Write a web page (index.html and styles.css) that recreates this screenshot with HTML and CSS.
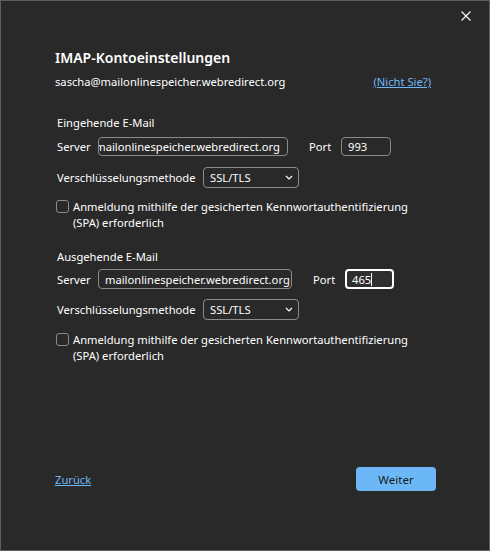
FILE: index.html
```html
<!DOCTYPE html>
<html lang="de">
<head>
    <meta charset="UTF-8">
    <title>IMAP-Kontoeinstellungen</title>
    <link rel="stylesheet" href="styles.css">
</head>
<body>
    <div class="dialog">
        <button class="close" aria-label="Schließen">
            <svg width="10" height="10" viewBox="0 0 10 10"><path d="M0.5 0.5 L9.5 9.5 M9.5 0.5 L0.5 9.5" stroke="#fff" stroke-width="1.1" fill="none"/></svg>
        </button>

        <h1>IMAP-Kontoeinstellungen</h1>
        <div class="account">
            <span>sascha@mailonlinespeicher.webredirect.org</span>
            <a href="#" class="link">(Nicht Sie?)</a>
        </div>

        <div class="section first">
            <div class="heading">Eingehende E-Mail</div>
            <div class="row">
                <span class="lbl server-lbl">Server</span>
                <div class="field server scrolled"><span>mailonlinespeicher.webredirect.org</span></div>
                <span class="lbl port-lbl">Port</span>
                <div class="field port"><span>993</span></div>
            </div>
            <div class="row enc">
                <span class="lbl enc-lbl">Verschlüsselungsmethode</span>
                <div class="select">
                    <span>SSL/TLS</span>
                    <svg width="8" height="5" viewBox="0 0 8 5"><path d="M1 1 L4 4 L7 1" stroke="#fff" stroke-width="1.2" fill="none"/></svg>
                </div>
            </div>
            <label class="check">
                <span class="box"></span>
                <span>Anmeldung mithilfe der gesicherten Kennwortauthentifizierung<br>(SPA) erforderlich</span>
            </label>
        </div>

        <div class="section second">
            <div class="heading">Ausgehende E-Mail</div>
            <div class="row">
                <span class="lbl server-lbl">Server</span>
                <div class="field server wide"><span>mailonlinespeicher.webredirect.org</span></div>
                <span class="lbl port-lbl">Port</span>
                <div class="field port focused"><span>465</span><i class="caret"></i></div>
            </div>
            <div class="row enc">
                <span class="lbl enc-lbl">Verschlüsselungsmethode</span>
                <div class="select">
                    <span>SSL/TLS</span>
                    <svg width="8" height="5" viewBox="0 0 8 5"><path d="M1 1 L4 4 L7 1" stroke="#fff" stroke-width="1.2" fill="none"/></svg>
                </div>
            </div>
            <label class="check">
                <span class="box"></span>
                <span>Anmeldung mithilfe der gesicherten Kennwortauthentifizierung<br>(SPA) erforderlich</span>
            </label>
        </div>

        <div class="footer">
            <a href="#" class="link">Zurück</a>
            <button class="primary">Weiter</button>
        </div>
    </div>
</body>
</html>
```

FILE: styles.css
```css
body {
    margin: 0;
    background-color: #292929;
    font-family: "Segoe UI", "Noto Sans", sans-serif;
    font-size: 11.2px;
    color: #fff;
}
.dialog {
    position: relative;
    box-sizing: border-box;
    width: 490px;
    height: 551px;
    border: 1px solid #5e5e5e;
    padding: 47px 0 59px 54px;
    display: flex;
    flex-direction: column;
}
.close {
    position: absolute;
    top: 10px;
    right: 18px;
    width: 10px;
    height: 10px;
    padding: 0;
    border: 0;
    background: none;
    line-height: 0;
}
h1 {
    margin: 0;
    font-size: 14px;
    font-weight: 600;
    line-height: 20px;
}
.account {
    display: flex;
    justify-content: space-between;
    width: 376px;
    margin-top: 6px;
    line-height: 16px;
}
.link {
    color: #6cb8f6;
}
.section {
    margin-left: 2px;
}
.section.first {
    margin-top: 25px;
}
.section.second {
    margin-top: 18px;
}
.heading {
    line-height: 16px;
}
.row {
    display: flex;
    align-items: center;
    margin-top: 6px;
}
.second .row {
    margin-top: 4px;
}
.row.enc {
    margin-top: 11px;
}
.second .row.enc {
    margin-top: 10px;
}
.lbl {
    flex: none;
}
.server-lbl {
    width: 41px;
}
.port-lbl {
    width: 32px;
    margin-left: 21px;
}
.enc-lbl {
    width: 146px;
}
.field {
    box-sizing: border-box;
    height: 19px;
    border: 1px solid #8a8a8a;
    border-radius: 4px;
    padding: 0 6px;
    display: flex;
    align-items: center;
    overflow: hidden;
    white-space: nowrap;
}
.second .field {
    height: 20px;
}
.field.server {
    width: 190px;
}
.field.server.wide {
    width: 194px;
}
.field.scrolled {
    justify-content: flex-end;
    padding-right: 7px;
}
.field.port {
    width: 50px;
}
.field.focused {
    width: 49px;
    border: 2px solid #fff;
    padding-left: 5px;
    background-color: #2f2f2f;
}
.caret {
    display: inline-block;
    width: 1px;
    height: 13px;
    background: #fff;
}
.select {
    box-sizing: border-box;
    width: 96px;
    height: 21px;
    border: 1px solid #8a8a8a;
    border-radius: 4px;
    padding: 0 5px 0 6px;
    display: flex;
    align-items: center;
    justify-content: space-between;
}
.check {
    display: flex;
    align-items: flex-start;
    margin-top: 11px;
    line-height: 16px;
}
.second .check {
    margin-top: 12px;
}
.box {
    flex: none;
    box-sizing: border-box;
    width: 13px;
    height: 13px;
    border: 1px solid #8a8a8a;
    border-radius: 3px;
    margin: 1px 4px 0 -1px;
}
.footer {
    margin-top: auto;
    width: 381px;
    display: flex;
    justify-content: space-between;
    align-items: center;
}
.primary {
    width: 80px;
    height: 24px;
    border: 0;
    border-radius: 4px;
    background-color: #6cb8f6;
    color: #1b1b1b;
    font-family: "Segoe UI", "Noto Sans", sans-serif;
    font-size: 11.5px;
}
```
